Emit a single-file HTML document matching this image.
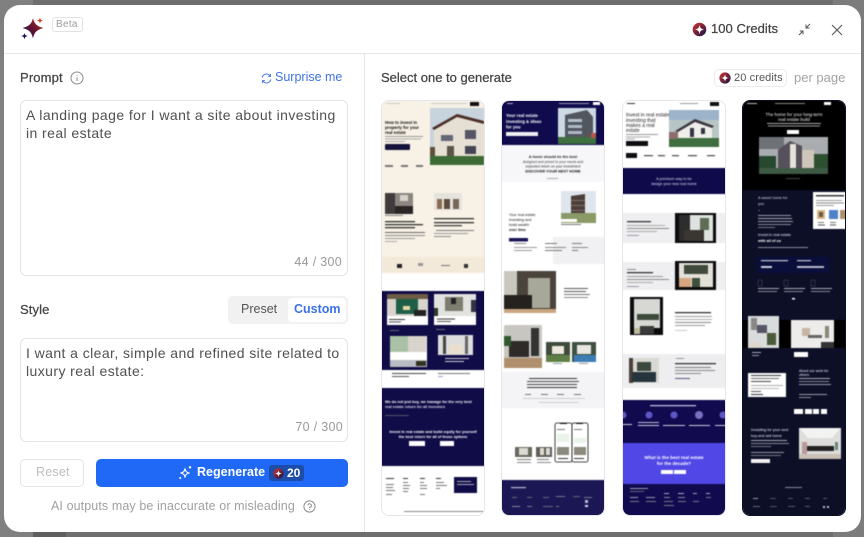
<!DOCTYPE html>
<html><head><meta charset="utf-8">
<style>
*{box-sizing:border-box}
html,body{margin:0;padding:0;width:864px;height:537px;overflow:hidden;background:#6e6e6e;font-family:"Liberation Sans",sans-serif}
.abs,.t{position:absolute}
.t{white-space:nowrap;line-height:1}
#modal{position:absolute;left:4px;top:5px;width:857px;height:527px;background:#fff;border-radius:16px}
.ta{position:absolute;left:20px;width:328px;background:#fff;border:1px solid #e4e4e6;border-radius:6px}
.body{position:absolute;left:26px;font-size:14px;line-height:18px;color:#505050;letter-spacing:.42px;white-space:nowrap}
.card{position:absolute;top:100px;width:104px;height:416px;border-radius:8px;overflow:hidden;background:#fff;border:1px solid #e6e6ea}
.card svg{display:block;position:absolute;left:-1px;top:-1px;filter:blur(.5px)}
.card text{font-family:"Liberation Sans",sans-serif}
</style></head><body>
<div class="abs" style="left:0;top:0;width:33px;height:537px;background:#808080"></div>
<div class="abs" style="left:33px;top:532px;width:33px;height:5px;background:#5f5f5f"></div>
<div class="abs" style="left:833px;top:0;width:31px;height:537px;background:#7c7c7c"></div>
<div id="modal"></div>
<div class="abs" style="left:4px;top:53px;width:857px;height:1px;background:#e6e6e8"></div>
<div class="abs" style="left:364px;top:54px;width:1px;height:478px;background:#e6e6e8"></div>

<svg class="abs" style="left:20px;top:16px" width="26" height="26" viewBox="0 0 26 26">
<defs><linearGradient id="sg" x1="0" y1="1" x2="1" y2="0"><stop offset="0" stop-color="#1b1150"/><stop offset=".55" stop-color="#6d1530"/><stop offset="1" stop-color="#e0401c"/></linearGradient></defs>
<path d="M13 2 C14.500 8 16.500 10 23.500 12 C16.500 14 14.500 16 13 22.500 C11.500 16 9.500 14 2.500 12 C9.500 10 11.500 8 13 2Z" fill="url(#sg)"/>
<path d="M20 1.500 C20.400 3.400 21 4 23 4.500 C21 5 20.400 5.600 20 7.500 C19.600 5.600 19 5 17 4.500 C19 4 19.600 3.400 20 1.500Z" fill="#d9401c" />
<path d="M4.500 17 C5 19 5.500 19.500 8 20 C5.500 20.500 5 21 4.500 23.500 C4 21 3.500 20.500 1 20 C3.500 19.500 4 19 4.500 17Z" fill="#1b1150"/>
</svg>
<div class="abs" style="left:52px;top:17px;width:31px;height:15px;border:1px solid #e2e2e2;border-radius:3px"></div>
<div class="t" style="left:56px;top:20px;font-size:10px;color:#9a9a9a;letter-spacing:.3px">Beta</div>

<svg class="abs" style="left:692px;top:22px" width="15" height="15" viewBox="0 0 15 15"><defs><linearGradient id="cg" x1="0" y1="0" x2="1" y2="1"><stop offset="0" stop-color="#d9342a"/><stop offset="1" stop-color="#12104a"/></linearGradient></defs><circle cx="7.500" cy="7.500" r="6.800" fill="url(#cg)"/><path d="M7.500 2.500 C7.900 6 9 7.100 12.500 7.500 C9 7.900 7.900 9 7.500 12.500 C7.100 9 6 7.900 2.500 7.500 C6 7.100 7.100 6 7.500 2.500Z" fill="#fff"/></svg>
<div class="t" style="left:711px;top:22px;font-size:13px;color:#444;letter-spacing:.05px;-webkit-text-stroke:.25px #444">100 Credits</div>
<svg class="abs" style="left:798px;top:23px" width="13" height="13" viewBox="0 0 13 13" fill="none" stroke="#555" stroke-width="1"><path d="M12 1 L8 5 M8 1.500 V5 H11.500"/><path d="M1 12 L5 8 M1.800 8 H5 V11.200"/></svg>
<svg class="abs" style="left:831px;top:24px" width="12" height="12" viewBox="0 0 12 12" fill="none" stroke="#555" stroke-width="1.100"><path d="M1 1 L11 11 M11 1 L1 11"/></svg>

<div class="t" style="left:20px;top:71px;font-size:13px;color:#444;letter-spacing:.15px;-webkit-text-stroke:.25px #444">Prompt</div>
<svg class="abs" style="left:70px;top:71px" width="14" height="14" viewBox="0 0 14 14" fill="none" stroke="#8a8a8a"><circle cx="7" cy="7" r="6"/><path d="M7 6.200 V10 M7 4 V4.900"/></svg>
<svg class="abs" style="left:261px;top:73px" width="11" height="11" viewBox="0 0 11 11" fill="none" stroke="#4a7de8" stroke-width="1"><path d="M1.200 4.500 A4.300 4.300 0 0 1 9 3 M9.500 1 V3.400 H7.200"/><path d="M9.800 6.500 A4.300 4.300 0 0 1 2 8 M1.500 10 V7.600 H3.800"/></svg>
<div class="t" style="left:275px;top:71px;font-size:12.500px;color:#3f73e6">Surprise me</div>

<div class="ta" style="top:100px;height:176px"></div>
<div class="body" style="top:106px">A landing page for I want a site about investing<br>in real estate</div>
<div class="t" style="right:522px;top:256px;font-size:12.500px;color:#999;letter-spacing:.3px">44 / 300</div>

<div class="t" style="left:20px;top:303px;font-size:13px;color:#444;letter-spacing:.1px;-webkit-text-stroke:.25px #444">Style</div>
<div class="abs" style="left:228px;top:296px;width:120px;height:28px;background:#f1f1f2;border-radius:5px"></div>
<div class="abs" style="left:288px;top:298px;width:58px;height:24px;background:#fff;border-radius:4px"></div>
<div class="t" style="left:241px;top:303px;font-size:12.500px;color:#555">Preset</div>
<div class="t" style="left:294px;top:303px;font-size:12.500px;font-weight:700;color:#3a72e8">Custom</div>

<div class="ta" style="top:338px;height:104px"></div>
<div class="body" style="top:344px">I want a clear, simple and refined site related to<br>luxury real estate:</div>
<div class="t" style="right:521px;top:421px;font-size:12.500px;color:#999;letter-spacing:.3px">70 / 300</div>

<div class="abs" style="left:20px;top:459px;width:64px;height:28px;border:1px solid #e4e4e6;border-radius:5px"></div>
<div class="t" style="left:36px;top:466px;font-size:12.500px;color:#bdbdbd;letter-spacing:.2px">Reset</div>
<div class="abs" style="left:96px;top:459px;width:252px;height:28px;background:#2069f6;border-radius:5px"></div>
<svg class="abs" style="left:178px;top:465px" width="15" height="15" viewBox="0 0 15 15" fill="none" stroke="#fff" stroke-width="1.100"><path d="M7 3.500 C7.400 6.300 8.400 7.400 11.500 8 C8.400 8.600 7.400 9.600 7 12.500 C6.600 9.600 5.600 8.600 2.500 8 C5.600 7.400 6.600 6.300 7 3.500Z"/><path d="M12 1 V3.600 M10.800 2.300 H13.200 M2.200 12 V14 M1.200 13 H3.200"/></svg>
<div class="t" style="left:197px;top:466px;font-size:12.500px;font-weight:700;color:#fff">Regenerate</div>
<div class="abs" style="left:269px;top:465px;width:35px;height:16px;background:#1c4da8;border-radius:3px"></div>
<svg class="abs" style="left:273px;top:468px" width="11" height="11" viewBox="0 0 15 15"><circle cx="7.500" cy="7.500" r="7" fill="url(#cg)"/><path d="M7.500 2.500 C7.900 6 9 7.100 12.500 7.500 C9 7.900 7.900 9 7.500 12.500 C7.100 9 6 7.900 2.500 7.500 C6 7.100 7.100 6 7.500 2.500Z" fill="#fff"/></svg>
<div class="t" style="left:287px;top:467px;font-size:12px;font-weight:700;color:#fff">20</div>
<div class="t" style="left:51px;top:500px;font-size:12.500px;color:#a0a0a0;letter-spacing:.1px">AI outputs may be inaccurate or misleading</div>
<svg class="abs" style="left:303px;top:500px" width="13" height="13" viewBox="0 0 13 13" fill="none" stroke="#8e8e8e"><circle cx="6.500" cy="6.500" r="5.600"/><path d="M4.800 5.200 A1.800 1.700 0 1 1 6.500 7.200 V8 M6.500 9 V9.900"/></svg>

<div class="t" style="left:381px;top:71px;font-size:13px;color:#444;-webkit-text-stroke:.25px #444">Select one to generate</div>
<div class="abs" style="left:714px;top:69px;width:73px;height:18px;border:1px solid #ececee;border-radius:5px"></div>
<svg class="abs" style="left:719px;top:72px" width="12" height="12" viewBox="0 0 15 15"><circle cx="7.500" cy="7.500" r="7" fill="url(#cg)"/><path d="M7.500 2.500 C7.900 6 9 7.100 12.500 7.500 C9 7.900 7.900 9 7.500 12.500 C7.100 9 6 7.900 2.500 7.500 C6 7.100 7.100 6 7.500 2.500Z" fill="#fff"/></svg>
<div class="t" style="left:734px;top:73px;font-size:11px;color:#555;letter-spacing:.1px">20 credits</div>
<div class="t" style="left:794px;top:71px;font-size:13px;color:#a3a3a3">per page</div>

<!-- CARD 1 -->
<div class="card" style="left:381px"><svg width="104" height="416" viewBox="0 0 104 416">
<rect width="104" height="173" fill="#f8f1e6"/><rect y="157" width="104" height="16" fill="#f3e9d8"/>
<rect x="89" y="2" width="9" height="4" fill="#111"/><rect x="50" y="3" width="36" height="1" fill="#ccc"/><rect x="5" y="3" width="14" height="1" fill="#ccc"/>
<rect x="49" y="8" width="54" height="57" fill="#c7d3dd"/><path d="M53 27 L76 15 L103 22 V56 H53Z" fill="#e5e0d3"/><path d="M51 28 L76 14 L103 21 V24 L76 17 L53 30Z" fill="#4b2e26"/><rect x="60" y="35" width="12" height="6" fill="#667"/><rect x="84" y="30" width="11" height="9" fill="#556"/><rect x="84" y="46" width="11" height="8" fill="#445"/><rect x="66" y="46" width="7" height="10" fill="#5b5348"/><rect x="49" y="56" width="54" height="9" fill="#3d6b35"/><rect x="49" y="47" width="5" height="9" fill="#5d4f3b"/>
<text x="4" y="24" font-size="4.200" font-weight="700" fill="#111">How to invest in</text><text x="4" y="29" font-size="4.200" font-weight="700" fill="#111">property for your</text><text x="4" y="34" font-size="4.200" font-weight="700" fill="#111">real estate</text>
<rect x="4" y="36" width="38" height="1" fill="#999"/><rect x="4" y="38.500" width="36" height="1" fill="#aaa"/><rect x="4" y="41" width="20" height="1" fill="#aaa"/>
<rect x="4" y="44" width="25" height="6" rx="1" fill="#15123a"/>
<rect x="4" y="65" width="8" height="2" fill="#777"/><rect x="20" y="65" width="7" height="2" fill="#777"/><rect x="35" y="65" width="7" height="2" fill="#777"/>
<rect x="4" y="93" width="28" height="21" fill="#8c8580"/><rect x="4" y="93" width="10" height="21" fill="#3f3b3a"/><rect x="14" y="106" width="18" height="8" fill="#2b2626"/><rect x="19" y="95" width="8" height="6" fill="#d6d2cc"/>
<rect x="53" y="93" width="28" height="17" fill="#e6e3de"/><rect x="56" y="99" width="5" height="10" fill="#8a6a52"/><rect x="63" y="99" width="6" height="10" fill="#5d4a3e"/><rect x="72" y="99" width="6" height="10" fill="#77675a"/>
<rect x="4" y="115" width="18" height="1" fill="#888"/>
<rect x="4" y="121" width="30" height="1.300" fill="#333"/><rect x="4" y="124" width="38" height="1.300" fill="#333"/><rect x="4" y="127" width="30" height="1.300" fill="#333"/>
<rect x="4" y="132" width="40" height="1" fill="#666"/><rect x="4" y="135" width="40" height="1" fill="#888"/><rect x="4" y="138" width="30" height="1" fill="#999"/><rect x="4" y="141" width="12" height="1" fill="#aaa"/>
<rect x="53" y="118" width="40" height="1.300" fill="#333"/><rect x="53" y="122" width="40" height="1.300" fill="#333"/><rect x="53" y="125" width="28" height="1.300" fill="#444"/>
<rect x="55" y="130" width="38" height="1" fill="#777"/><rect x="53" y="133" width="34" height="1" fill="#999"/><rect x="53" y="136" width="17" height="1" fill="#888"/>
<rect x="16" y="164" width="5" height="4" fill="#222"/><rect x="37" y="163" width="5" height="3" fill="#999"/><rect x="60" y="165" width="9" height="1" fill="#777"/><rect x="83" y="164" width="4" height="4" fill="#333"/>
<rect y="191" width="104" height="79" fill="#100c47"/>
<rect x="6" y="194" width="41" height="31" fill="#d9d5cc"/><rect x="6" y="194" width="41" height="5" fill="#6f5c45"/><rect x="15" y="199" width="22" height="15" fill="#1f5e47"/><rect x="22" y="206" width="7" height="4" fill="#e8d9a8"/><rect x="33" y="210" width="12" height="6" fill="#222"/><rect x="6" y="216" width="41" height="9" fill="#fff"/><rect x="8" y="219" width="16" height="1" fill="#333"/><rect x="8" y="221.500" width="12" height="1" fill="#555"/>
<rect x="53" y="194" width="42" height="31" fill="#e2e2de"/><rect x="64" y="197" width="18" height="14" fill="#7d7d70"/><rect x="70" y="198" width="5" height="6" fill="#222"/><rect x="53" y="208" width="4" height="10" fill="#2c3a2b"/><rect x="90" y="200" width="5" height="12" fill="#334"/><rect x="53" y="216" width="42" height="9" fill="#fff"/><rect x="56" y="218.500" width="18" height="1" fill="#333"/><rect x="56" y="221" width="14" height="1" fill="#555"/>
<rect x="9" y="230" width="9" height="1" fill="#667"/><rect x="55" y="229" width="9" height="1" fill="#667"/>
<rect x="9" y="236" width="37" height="31" fill="#eee"/><rect x="9" y="236" width="18" height="16" fill="#a9c1a6"/><rect x="27" y="236" width="18" height="16" fill="#d8d4cb"/><rect x="9" y="252" width="37" height="8" fill="#fff"/><rect x="9" y="260" width="37" height="7" fill="#b9bcc2"/><rect x="35" y="261" width="10" height="5" fill="#332"/>
<rect x="57" y="235" width="35" height="20" fill="#ddd"/><rect x="62" y="236" width="3" height="18" fill="#444"/><rect x="84" y="236" width="3" height="18" fill="#666"/><rect x="68" y="245" width="14" height="9" fill="#eadfcf"/>
<rect x="64" y="258" width="24" height="1" fill="#ccd"/><rect x="64" y="261" width="19" height="1" fill="#ccd"/>
<rect x="11" y="273" width="34" height="1" fill="#444"/><rect x="11" y="276" width="17" height="1" fill="#555"/><rect x="57" y="273" width="32" height="1" fill="#777"/><rect x="57" y="276" width="5" height="1" fill="#99c"/>
<rect y="288" width="104" height="78" fill="#100c47"/>
<text x="4" y="303" font-size="3.800" font-weight="700" fill="#fff">We do not just buy, we manage for the very best</text><text x="4" y="308" font-size="3.800" font-weight="700" fill="#dcdcf0">real estate return for all investors</text>
<rect x="4" y="315" width="24" height="1" fill="#556"/>
<text x="52" y="333" text-anchor="middle" font-size="3.800" font-weight="700" fill="#fff">Invest in real estate and build equity for yourself</text><text x="52" y="338" text-anchor="middle" font-size="3.800" font-weight="700" fill="#fff">the best return for all of those options</text>
<rect x="28" y="341" width="16" height="5" fill="#fff"/><rect x="59" y="341" width="14" height="5" fill="#fff"/>
<rect x="5" y="378" width="8" height="1" fill="#333"/><rect x="22" y="378" width="5" height="1" fill="#333"/><rect x="39" y="378" width="5" height="1" fill="#333"/><rect x="55" y="378" width="5" height="1" fill="#333"/>
<rect x="5" y="384" width="8" height="1" fill="#777"/><rect x="5" y="387" width="7" height="1" fill="#777"/><rect x="5" y="390" width="9" height="1" fill="#777"/><rect x="5" y="394" width="6" height="1" fill="#777"/><rect x="22" y="382" width="5" height="1" fill="#777"/><rect x="22" y="385" width="7" height="1" fill="#777"/><rect x="22" y="388" width="6" height="1" fill="#777"/><rect x="22" y="391" width="5" height="1" fill="#777"/><rect x="39" y="382" width="4" height="1" fill="#777"/><rect x="39" y="385" width="7" height="1" fill="#777"/><rect x="39" y="388" width="7" height="1" fill="#777"/><rect x="39" y="394" width="5" height="1" fill="#777"/><rect x="55" y="382" width="8" height="1" fill="#777"/><rect x="55" y="385" width="11" height="1" fill="#777"/><rect x="55" y="388" width="4" height="1" fill="#777"/>
<rect x="73" y="377" width="23" height="16" fill="#100c47"/><rect x="76" y="381" width="14" height="1" fill="#aab"/><rect x="76" y="384" width="17" height="1" fill="#aab"/>
<rect x="23" y="411" width="80" height="1" fill="#888"/>
</svg></div>

<!-- CARD 2 -->
<div class="card" style="left:501px"><svg width="104" height="416" viewBox="0 0 104 416">
<rect width="104" height="45" fill="#0f0b4c"/>
<rect x="6" y="3" width="6" height="1" fill="#aab"/><rect x="58" y="3" width="30" height="1" fill="#99a"/><rect x="92" y="2" width="7" height="3" fill="#fff"/>
<rect x="57" y="8" width="38" height="36" fill="#cdd9e4"/><path d="M64 15 L86 10 L92 17 V38 H64Z" fill="#51565f"/><rect x="67" y="19" width="14" height="3" fill="#b5bfcc"/><rect x="67" y="25" width="14" height="3" fill="#aeb9c8"/><rect x="67" y="31" width="14" height="3" fill="#aeb9c8"/><rect x="57" y="37" width="38" height="7" fill="#3f7140"/><rect x="90" y="33" width="5" height="5" fill="#b5574a"/>
<text x="5" y="17" font-size="4.300" font-weight="700" fill="#fff">Your real estate</text><text x="5" y="23" font-size="4.300" font-weight="700" fill="#fff">investing &amp; ideas</text><text x="5" y="28.500" font-size="4.300" font-weight="700" fill="#fff">for you</text>
<rect x="5" y="32" width="32" height="4" fill="#f0f0f4"/>
<rect y="45" width="104" height="37" fill="#f7f7f9"/>
<text x="52" y="58" text-anchor="middle" font-size="3.800" font-weight="700" fill="#222">A home should be the best</text><text x="52" y="63" text-anchor="middle" font-size="3.500" fill="#333">designed and priced to your needs and</text><text x="52" y="67.500" text-anchor="middle" font-size="3.500" fill="#222">expected return on your investment</text><text x="52" y="72.500" text-anchor="middle" font-size="3.800" font-weight="700" fill="#111">DISCOVER YOUR NEXT HOME</text>
<rect x="46" y="78" width="11" height="1" fill="#aaa"/>
<rect x="60" y="91" width="35" height="32" fill="#dfe5ec"/><path d="M70 96 L84 94 V118 H70Z" fill="#4b3f3a"/><rect x="60" y="113" width="35" height="10" fill="#8a9a66"/><rect x="70" y="100" width="14" height="1" fill="#7d7066"/><rect x="70" y="105" width="14" height="1" fill="#7d7066"/><rect x="70" y="110" width="14" height="1" fill="#7d7066"/><rect x="60" y="119" width="16" height="3" fill="#fff"/>
<rect x="60" y="124" width="20" height="1" fill="#777"/>
<text x="8" y="116" font-size="3.800" fill="#111">Your real estate</text><text x="8" y="121" font-size="3.800" fill="#111">investing and</text><text x="8" y="126" font-size="3.800" fill="#111">build wealth</text><text x="8" y="131" font-size="3.800" font-weight="700" fill="#111">over time</text>
<rect x="8" y="138" width="19" height="3.500" fill="#1a1554"/>
<rect x="52" y="137" width="52" height="27" fill="#f1f1f4"/>
<rect x="13" y="143" width="12" height="1" fill="#888"/><rect x="13" y="147" width="23" height="1" fill="#999"/><rect x="13" y="150" width="18" height="1" fill="#999"/>
<rect x="44" y="143" width="12" height="1" fill="#777"/><rect x="44" y="147" width="21" height="1" fill="#888"/><rect x="44" y="150" width="17" height="1" fill="#777"/>
<rect x="71" y="143" width="10" height="1" fill="#777"/><rect x="71" y="147" width="16" height="1" fill="#888"/><rect x="71" y="150" width="6" height="1" fill="#777"/>
<rect x="3" y="171" width="52" height="42" fill="#e7e4dd"/><rect x="3" y="171" width="13" height="24" fill="#c9c6bd"/><rect x="16" y="171" width="39" height="42" fill="#4a443d"/><rect x="27" y="178" width="22" height="30" fill="#a7a89a"/><rect x="3" y="195" width="28" height="14" fill="#24211f"/><rect x="3" y="209" width="52" height="4" fill="#c9a680"/>
<rect x="63" y="188" width="24" height="1" fill="#555"/><rect x="63" y="191" width="22" height="1" fill="#555"/><rect x="63" y="194" width="26" height="1" fill="#777"/><rect x="63" y="197" width="24" height="1" fill="#888"/>
<rect x="3" y="225" width="38" height="43" rx="2" fill="#c8c6c0"/><rect x="30" y="228" width="8" height="28" fill="#333"/><rect x="8" y="241" width="20" height="16" fill="#2e2b29"/><rect x="3" y="236" width="7" height="10" fill="#2f5a2e"/><rect x="3" y="258" width="38" height="10" fill="#b08f6c"/>
<rect x="45" y="242" width="24" height="20" fill="#3e4a3a"/><rect x="51" y="246" width="12" height="8" fill="#ece8df"/><rect x="45" y="255" width="24" height="7" fill="#5d7f45"/>
<rect x="71" y="242" width="24" height="20" fill="#405040"/><rect x="76" y="245" width="14" height="9" fill="#e7e7e2"/><rect x="73" y="255" width="22" height="7" fill="#3c7cb5"/>
<rect x="52" y="263" width="9" height="1" fill="#999"/><rect x="78" y="263" width="9" height="1" fill="#999"/>
<rect y="272" width="104" height="36" fill="#f4f4f6"/>
<rect x="28" y="278" width="48" height="1" fill="#333"/><rect x="26" y="281" width="52" height="1" fill="#444"/><rect x="26" y="284" width="50" height="1" fill="#444"/><rect x="26" y="287" width="50" height="1" fill="#333"/>
<rect x="24" y="294" width="6" height="1" fill="#777"/><rect x="40" y="294" width="7" height="1" fill="#777"/><rect x="56" y="294" width="7" height="1" fill="#777"/><rect x="73" y="294" width="7" height="1" fill="#777"/>
<rect x="22" y="298" width="62" height="1" fill="#ccc"/><rect x="38" y="302" width="40" height="1" fill="#ccc"/>
<rect x="14" y="347" width="17" height="10" fill="#69685f"/><rect x="18" y="348" width="9" height="7" fill="#dcdad2"/><rect x="35" y="347" width="16" height="10" fill="#615d55"/><rect x="39" y="348" width="4" height="7" fill="#dcdad2"/><rect x="45" y="348" width="4" height="7" fill="#dcdad2"/>
<rect x="16" y="359" width="14" height="1" fill="#777"/><rect x="16" y="362" width="14" height="1" fill="#888"/><rect x="36" y="359" width="12" height="1" fill="#777"/><rect x="36" y="362" width="14" height="1" fill="#888"/>
<rect x="54" y="323" width="17" height="39" rx="2" fill="#fff" stroke="#111" stroke-width=".8"/><rect x="71" y="323" width="16" height="39" rx="2" fill="#fff" stroke="#111" stroke-width=".8"/><rect x="59" y="323" width="7" height="1" fill="#111"/><rect x="75" y="323" width="7" height="1" fill="#111"/>
<rect x="56" y="334" width="12" height="8" fill="#e7f4e7"/><rect x="73" y="338" width="12" height="5" fill="#e8f4e8"/><rect x="56" y="329" width="8" height="1" fill="#777"/><rect x="73" y="329" width="8" height="1" fill="#777"/><rect x="56" y="347" width="12" height="8" fill="#8b8a7c"/><rect x="73" y="347" width="12" height="8" fill="#8b8a7c"/><rect x="57" y="358" width="10" height="1" fill="#333"/><rect x="73" y="358" width="10" height="1" fill="#333"/>
<rect y="380" width="104" height="36" fill="#1b1755"/>
<rect x="10" y="387" width="15" height="1.200" fill="#bbc"/><rect x="11" y="397" width="5" height="1" fill="#667"/><rect x="26" y="397" width="5" height="1" fill="#667"/><rect x="42" y="397" width="6" height="1" fill="#667"/><rect x="55" y="396" width="9" height="1" fill="#778"/><rect x="72" y="396" width="7" height="1" fill="#667"/><rect x="83" y="397" width="8" height="1" fill="#778"/><rect x="11" y="406" width="8" height="1" fill="#889"/><rect x="26" y="406" width="5" height="1" fill="#778"/><rect x="42" y="406" width="10" height="1" fill="#667"/><rect x="55" y="406" width="3" height="1" fill="#778"/><rect x="84" y="400" width="3" height="3" fill="#bbc"/><rect x="84" y="405" width="3" height="2" fill="#dde"/>
</svg></div>

<!-- CARD 3 -->
<div class="card" style="left:622px"><svg width="104" height="416" viewBox="0 0 104 416">
<rect x="5" y="3" width="8" height="1" fill="#333"/><rect x="58" y="3" width="18" height="1" fill="#999"/><rect x="88" y="2" width="9" height="4" fill="#111"/>
<text x="4" y="16.500" font-size="5" fill="#222">Invest in real estate</text><text x="4" y="22" font-size="5" fill="#222">investing that</text><text x="4" y="27" font-size="5" fill="#222">makes a real</text><text x="4" y="32" font-size="5" fill="#222">estate</text>
<rect x="4" y="34" width="32" height="1" fill="#999"/><rect x="4" y="36.500" width="24" height="1" fill="#aaa"/><rect x="4" y="38.500" width="9" height="1" fill="#aaa"/>
<rect x="4" y="41" width="22" height="5" fill="#0d0d12"/>
<rect x="47" y="10" width="50" height="37" fill="#b7c6c5"/><rect x="47" y="10" width="50" height="10" fill="#9db3c9"/><path d="M56 30 L73 20 L90 26 V40 H56Z" fill="#efeeea"/><path d="M53 31 L73 19 L92 26 L90 28 L73 22 L56 32Z" fill="#3c3640"/><rect x="68" y="28" width="4" height="9" fill="#334"/><rect x="79" y="28" width="4" height="6" fill="#334"/><rect x="47" y="38" width="50" height="9" fill="#3f6f41"/><rect x="47" y="32" width="9" height="7" fill="#8d6c6d"/>
<rect x="4" y="53" width="11" height="5" fill="#0d0d12"/><rect x="22" y="55" width="9" height="1.300" fill="#555"/><rect x="36" y="55" width="7" height="1.300" fill="#555"/><rect x="50" y="55" width="7" height="1.300" fill="#555"/><rect x="66" y="55" width="9" height="1.300" fill="#555"/><rect x="85" y="55" width="8" height="1.300" fill="#555"/>
<rect y="68" width="104" height="26" fill="#0f0a4a"/>
<text x="52" y="80" text-anchor="middle" font-size="3.800" fill="#dfe0f5">A premium way to be</text><text x="52" y="85" text-anchor="middle" font-size="3.800" fill="#dfe0f5">design your new real home</text>
<rect y="113" width="104" height="30" fill="#efeff1"/><rect x="53" y="113" width="41" height="30" fill="#0b0b0d"/><rect x="57" y="115" width="34" height="26" fill="#dfe3df"/><rect x="57" y="115" width="11" height="26" fill="#2d2d2d"/><rect x="78" y="118" width="9" height="12" fill="#5f6d58"/><rect x="62" y="130" width="20" height="11" fill="#3a3632"/>
<rect x="5" y="121" width="24" height="1.300" fill="#333"/><rect x="5" y="125" width="38" height="1" fill="#aaa"/><rect x="5" y="128" width="42" height="1" fill="#888"/><rect x="5" y="131" width="30" height="1" fill="#aaa"/><rect x="5" y="135" width="12" height="1" fill="#99a"/>
<rect y="162" width="104" height="28" fill="#efeff1"/><rect x="53" y="161" width="41" height="29" fill="#0b0b0d"/><rect x="57" y="163" width="34" height="24" fill="#e2e0d9"/><rect x="62" y="165" width="24" height="9" fill="#3f4a3c"/><rect x="57" y="178" width="12" height="9" fill="#d7a57f"/><rect x="70" y="178" width="8" height="9" fill="#3f4f3a"/>
<rect x="5" y="169" width="9" height="1" fill="#888"/><rect x="5" y="172" width="26" height="1.300" fill="#333"/><rect x="5" y="176" width="36" height="1" fill="#999"/><rect x="5" y="179" width="42" height="1" fill="#888"/><rect x="5" y="182" width="26" height="1" fill="#aaa"/><rect x="5" y="186" width="12" height="1" fill="#99a"/>
<rect x="8" y="197" width="33" height="38" fill="#0b0b0d"/><rect x="12" y="199" width="26" height="29" fill="#d7d7d3"/><rect x="15" y="214" width="22" height="6" fill="#3e4a3c"/><rect x="18" y="226" width="14" height="8" fill="#3a3a3a"/><rect x="12" y="228" width="6" height="6" fill="#bb9" />
<rect x="53" y="212" width="36" height="1.300" fill="#333"/><rect x="53" y="216" width="37" height="1" fill="#999"/><rect x="53" y="219" width="37" height="1" fill="#aaa"/><rect x="53" y="222" width="36" height="1" fill="#888"/><rect x="53" y="225" width="30" height="1" fill="#999"/><rect x="53" y="230" width="12" height="1" fill="#ccc"/>
<rect y="254" width="104" height="34" fill="#eeeef0"/><rect x="7" y="258" width="30" height="25" fill="#d8d9d5"/><rect x="15" y="262" width="14" height="9" fill="#3b4a3c"/><rect x="7" y="258" width="4" height="25" fill="#4b3f3a"/><rect x="10" y="272" width="24" height="10" fill="#26343c"/>
<rect x="54" y="258" width="8" height="1" fill="#999"/><rect x="53" y="263" width="41" height="1.300" fill="#333"/><rect x="53" y="267" width="36" height="1" fill="#777"/><rect x="53" y="270" width="40" height="1" fill="#888"/><rect x="53" y="273" width="26" height="1" fill="#888"/><rect x="53" y="278" width="15" height="1" fill="#558"/>
<rect y="300" width="104" height="43" fill="#120a4e"/>
<rect x="28" y="305" width="46" height="1.300" fill="#bbbbe0"/>
<circle cx="1" cy="315" r="3.500" fill="#5e57c8"/><circle cx="27" cy="315" r="3.500" fill="#5e57c8"/><circle cx="52" cy="315" r="3.500" fill="#5e57c8"/><circle cx="77" cy="315" r="4" fill="#7773c0"/><circle cx="101" cy="315" r="3.500" fill="#5e57c8"/>
<rect x="0" y="324" width="10" height="1" fill="#ccd"/><rect x="16" y="322" width="21" height="1" fill="#bbd"/><rect x="16" y="325" width="21" height="1" fill="#ccd"/><rect x="41" y="325" width="22" height="1" fill="#ccd"/><rect x="67" y="325" width="21" height="1" fill="#ccd"/><rect x="93" y="325" width="11" height="1" fill="#ccd"/>
<rect y="343" width="104" height="41" fill="#5047e6"/>
<text x="52" y="359" text-anchor="middle" font-size="4.600" font-weight="700" fill="#fff">What is the best real estate</text><text x="52" y="365" text-anchor="middle" font-size="4.600" font-weight="700" fill="#fff">for the decade?</text>
<rect x="39" y="370" width="12" height="4" fill="#fff"/><rect x="52" y="370" width="12" height="4" fill="#fff"/>
<rect y="384" width="104" height="32" fill="#120a4e"/>
<rect x="8" y="388" width="18" height="1" fill="#99a"/><rect x="8" y="391" width="14" height="1" fill="#667"/><rect x="8" y="397" width="8" height="1" fill="#99a"/><rect x="24" y="397" width="9" height="1" fill="#99a"/><rect x="8" y="401" width="9" height="1" fill="#778"/><rect x="24" y="401" width="10" height="1" fill="#778"/><rect x="42" y="393" width="5" height="1" fill="#aab"/><rect x="42" y="397" width="6" height="1" fill="#889"/><rect x="42" y="401" width="9" height="1" fill="#778"/><rect x="42" y="405" width="10" height="1" fill="#778"/><rect x="56" y="393" width="6" height="1" fill="#aab"/><rect x="56" y="397" width="7" height="1" fill="#889"/><rect x="56" y="401" width="8" height="1" fill="#778"/><rect x="71" y="393" width="4" height="1" fill="#aab"/><rect x="71" y="401" width="6" height="1" fill="#778"/><rect x="84" y="393" width="4" height="1" fill="#aab"/><rect x="84" y="397" width="5" height="1" fill="#778"/>
</svg></div>

<!-- CARD 4 -->
<div class="card" style="left:742px;border-color:#0b0e22"><svg width="104" height="416" viewBox="0 0 104 416">
<rect width="104" height="416" fill="#0c0f26"/><rect width="104" height="90" fill="#000"/>
<rect x="5" y="3" width="10" height="1" fill="#bbb"/><rect x="33" y="3" width="30" height="1" fill="#888"/><rect x="82" y="2" width="7" height="3" fill="#fff"/>
<text x="52" y="16" text-anchor="middle" font-size="4.500" fill="#f0f0f0">The home for your long-term</text><text x="52" y="21" text-anchor="middle" font-size="4.500" fill="#f0f0f0">real estate build</text>
<rect x="25" y="23" width="54" height="1" fill="#aaa"/><rect x="26" y="25.500" width="52" height="1" fill="#999"/>
<rect x="45" y="30" width="12" height="4" fill="#fff"/>
<rect x="17" y="37" width="69" height="37" fill="#a9adb0"/><rect x="17" y="37" width="25" height="12" fill="#6e7276"/><path d="M36 50 L48 41 L60 46 V68 H36Z" fill="#56505a"/><rect x="48" y="44" width="6" height="24" fill="#e5e2dd"/><rect x="60" y="50" width="12" height="18" fill="#cfc6bb"/><rect x="17" y="56" width="17" height="14" fill="#27482e"/><rect x="72" y="54" width="14" height="15" fill="#2d5031"/><rect x="17" y="68" width="69" height="6" fill="#3e5a45"/>
<rect x="44" y="78" width="14" height="1" fill="#444"/>
<rect x="71" y="92" width="33" height="37" fill="#fff"/><rect x="74" y="95" width="28" height="1.500" fill="#333"/><rect x="74" y="100" width="26" height="1" fill="#999"/><rect x="74" y="102.500" width="28" height="1" fill="#888"/><rect x="74" y="105" width="18" height="1" fill="#999"/>
<rect x="75" y="110" width="8" height="9" fill="#d7b68a"/><rect x="77" y="112" width="4" height="5" fill="#6c5c3f"/><rect x="87" y="110" width="9" height="9" fill="#4c80c9"/><rect x="98" y="110" width="6" height="9" fill="#ac9269"/><rect x="76" y="122" width="6" height="1" fill="#777"/><rect x="76" y="124.500" width="7" height="1" fill="#555"/><rect x="88" y="122" width="6" height="1" fill="#777"/><rect x="88" y="124.500" width="6" height="1" fill="#555"/>
<text x="16" y="99" font-size="3.800" fill="#dde">A sweet home for</text><text x="16" y="105" font-size="3.800" fill="#dde">you</text>
<rect x="16" y="110" width="2" height="1" fill="#556"/><rect x="16" y="115" width="33" height="1" fill="#99a"/><rect x="16" y="118" width="34" height="1" fill="#aab"/><rect x="16" y="121" width="35" height="1" fill="#99a"/><rect x="16" y="124" width="33" height="1" fill="#889"/><rect x="16" y="127" width="17" height="1" fill="#778"/>
<text x="16" y="136" font-size="3.800" fill="#eef">Invest in real estate</text><text x="16" y="142" font-size="3.800" font-weight="700" fill="#fff">with all of us</text>
<rect x="16" y="147" width="50" height="1" fill="#889"/>
<rect x="15" y="157" width="72" height="16" fill="#0a0e3a"/><rect x="19" y="160" width="27" height="1.300" fill="#bbc"/><rect x="19" y="166" width="11" height="2" fill="#ccd"/><rect x="55" y="160" width="14" height="1.300" fill="#bbc"/><rect x="55" y="166" width="27" height="2" fill="#bbc"/>
<rect x="16" y="180" width="4" height="6" fill="none" stroke="#445" stroke-width=".6"/><rect x="42" y="180" width="4" height="6" fill="none" stroke="#445" stroke-width=".6"/><rect x="69" y="180" width="4" height="6" fill="none" stroke="#445" stroke-width=".6"/>
<rect x="16" y="188" width="21" height="1" fill="#aab"/><rect x="16" y="191" width="19" height="1" fill="#889"/><rect x="42" y="188" width="21" height="1" fill="#aab"/><rect x="42" y="191" width="19" height="1" fill="#889"/><rect x="69" y="188" width="21" height="1" fill="#aab"/><rect x="69" y="191" width="19" height="1" fill="#889"/>
<rect x="50" y="198" width="3" height="1.500" fill="#fff"/>
<rect y="220" width="104" height="28" fill="#000"/>
<rect x="6" y="216" width="31" height="32" fill="#d9dcdc"/><rect x="9" y="218" width="6" height="12" fill="#888"/><rect x="15" y="225" width="10" height="8" fill="#556"/><rect x="25" y="233" width="9" height="12" fill="#4a5a3a"/><rect x="6" y="242" width="14" height="6" fill="#dcd8cf"/>
<rect x="49" y="220" width="43" height="28" fill="#edecea"/><rect x="60" y="228" width="8" height="8" fill="#c7b6a6"/><rect x="66" y="235" width="14" height="3" fill="#666"/><rect x="83" y="226" width="4" height="12" fill="#887"/><rect x="79" y="242" width="13" height="6" fill="#333"/>
<rect x="10" y="252" width="9" height="1" fill="#aab"/><rect x="10" y="255" width="7" height="1" fill="#99a"/><rect x="52" y="252" width="14" height="5" fill="#fff"/>
<rect x="6" y="273" width="38" height="24" fill="#fff"/><rect x="9" y="275" width="30" height="1" fill="#333"/><rect x="9" y="278" width="28" height="1" fill="#666"/><rect x="9" y="281" width="20" height="1" fill="#444"/><rect x="9" y="285" width="32" height="1" fill="#aaa"/><rect x="9" y="288" width="28" height="1" fill="#bbb"/><rect x="9" y="291" width="10" height="1" fill="#555"/><rect x="9" y="294" width="12" height="1" fill="#333"/>
<text x="57" y="272" font-size="3.600" fill="#eef">About our work for</text><text x="57" y="276" font-size="3.600" fill="#eef">others</text>
<rect x="57" y="278" width="31" height="1" fill="#aab"/><rect x="57" y="281" width="30" height="1" fill="#889"/><rect x="57" y="284" width="32" height="1" fill="#99a"/><rect x="57" y="294" width="28" height="1" fill="#99a"/><rect x="57" y="297" width="12" height="1" fill="#889"/>
<rect x="52" y="309" width="9" height="5" fill="#fff"/><rect x="63" y="309" width="7" height="5" fill="#fff"/><rect x="71" y="309" width="6" height="5" fill="#fff"/><rect x="79" y="309" width="6" height="5" fill="#fff"/>
<text x="9" y="331" font-size="3.800" fill="#eef">Investing for your next</text><text x="9" y="337" font-size="3.800" fill="#eef">buy and sell home</text>
<rect x="9" y="340" width="36" height="1" fill="#aab"/><rect x="9" y="343" width="38" height="1" fill="#889"/><rect x="9" y="346" width="20" height="1" fill="#778"/><rect x="9" y="352" width="33" height="1" fill="#99a"/><rect x="9" y="355" width="30" height="1" fill="#778"/>
<rect x="9" y="359" width="19" height="4" fill="#f2f2f2"/>
<rect x="57" y="328" width="42" height="31" fill="#dedddb"/><path d="M57 328 H99 L90 338 H66Z" fill="#f3f3f2"/><rect x="64" y="346" width="28" height="5" fill="#222"/><rect x="60" y="342" width="5" height="12" fill="#b99"/><rect x="93" y="342" width="3" height="8" fill="#687"/><rect x="57" y="354" width="42" height="5" fill="#c9c1b6"/>
<rect x="43" y="387" width="17" height="1" fill="#889"/>
<rect x="11" y="398" width="5" height="1" fill="#99a"/><rect x="28" y="398" width="6" height="1" fill="#556"/><rect x="46" y="398" width="5" height="1" fill="#556"/><rect x="63" y="398" width="5" height="1" fill="#556"/><rect x="81" y="398" width="4" height="1" fill="#556"/><rect x="11" y="406" width="7" height="1" fill="#667"/><rect x="28" y="406" width="7" height="1" fill="#556"/><rect x="46" y="406" width="7" height="1" fill="#556"/><rect x="63" y="406" width="5" height="1" fill="#556"/><rect x="81" y="406" width="2" height="2" fill="#bbc"/><rect x="85" y="406" width="2" height="2" fill="#bbc"/>
</svg></div>
</body></html>
